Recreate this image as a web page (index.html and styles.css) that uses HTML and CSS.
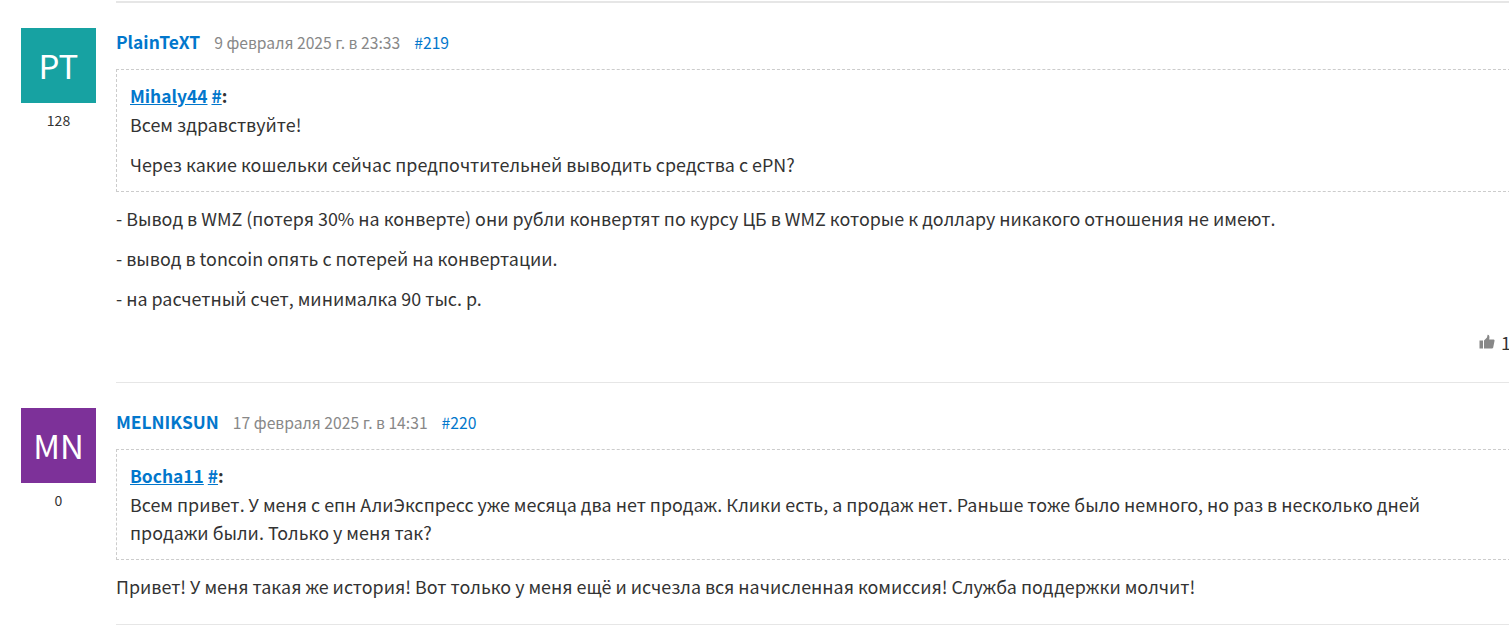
FILE: index.html
```html
<!DOCTYPE html>
<html lang="ru">
  <head>
    <meta charset="UTF-8" />
    <title>Комментарии</title>
    <link rel="stylesheet" href="styles.css">
  </head>
  <body>
    <div class="comments">
      <div class="top-rule"></div>

      <div class="comment">
        <div class="author-side">
          <div class="avatar avatar-teal">PT</div>
          <div class="rating">128</div>
        </div>
        <div class="comment-body">
          <div class="meta">
            <a class="author" href="#">PlainTeXT</a>
            <span class="date">9 февраля 2025 г. в 23:33</span>
            <a class="num" href="#">#219</a>
          </div>
          <blockquote class="quote">
            <div class="quote-head"><a href="#">Mihaly44</a> <a href="#">#</a>:</div>
            <p class="quote-first">Всем здравствуйте!</p>
            <p>Через какие кошельки сейчас предпочтительней выводить средства с ePN?</p>
          </blockquote>
          <p>- Вывод в WMZ (потеря 30% на конверте) они рубли конвертят по курсу ЦБ в WMZ которые к доллару никакого отношения не имеют.</p>
          <p>- вывод в toncoin опять с потерей на конвертации.</p>
          <p>- на расчетный счет, минималка 90 тыс. р.</p>
          <div class="likes">
            <svg class="thumb" width="16" height="16" viewBox="0 0 16 16">
              <rect x="0.5" y="6.5" width="3.5" height="8" fill="#888"/>
              <path d="M5 6.5 L8 3.5 L8.6 0.8 C10.4 0.8 10.8 2.6 10.2 5.5 L14.6 5.5 C15.6 5.5 15.8 6.6 15.4 7.4 L14.2 13.4 C14 14.2 13.4 14.5 12.6 14.5 L5 14.5 Z" fill="#888"/>
            </svg>
            <span>1</span>
          </div>
        </div>
      </div>

      <div class="comment comment-second">
        <div class="author-side">
          <div class="avatar avatar-purple">MN</div>
          <div class="rating">0</div>
        </div>
        <div class="comment-body comment-body-last">
          <div class="meta">
            <a class="author" href="#">MELNIKSUN</a>
            <span class="date">17 февраля 2025 г. в 14:31</span>
            <a class="num" href="#">#220</a>
          </div>
          <blockquote class="quote">
            <div class="quote-head"><a href="#">Bocha11</a> <a href="#">#</a>:</div>
            <p class="quote-first">Всем привет. У меня с епн АлиЭкспресс уже месяца два нет продаж. Клики есть, а продаж нет. Раньше тоже было немного, но раз в несколько дней продажи были. Только у меня так?</p>
          </blockquote>
          <p>Привет! У меня такая же история! Вот только у меня ещё и исчезла вся начисленная комиссия! Служба поддержки молчит!</p>
        </div>
      </div>
    </div>
  </body>
</html>
```

FILE: styles.css
```css
html,
body {
  margin: 0;
  padding: 0;
  overflow: hidden;
  height: 628px;
}
body {
  background: #fff;
  color: #333;
  font-family: "Noto Sans CJK SC", "Noto Sans", sans-serif;
  font-size: 17.9px;
  line-height: 28px;
}
a {
  color: #0277cc;
  text-decoration: none;
}
p {
  margin: 0 0 12px;
}
.comments {
  width: 1511px;
  padding-top: 1px;
}
.top-rule {
  margin-left: 116px;
  height: 2px;
  background: #e6e6e6;
}
.comment {
  display: flex;
  padding: 25px 0 0 21px;
}
.comment-second {
  padding-top: 0;
}
.author-side {
  width: 75px;
  margin-right: 20px;
  flex-shrink: 0;
  text-align: center;
}
.avatar {
  height: 75px;
  line-height: 75px;
  font-size: 33px;
  color: #fff;
}
.avatar-teal {
  background: #17a2a2;
}
.avatar-purple {
  background: #7d3199;
}
.rating {
  margin-top: 3px;
  font-size: 14px;
}
.comment-body {
  flex: 1;
  min-width: 0;
}
.comment-body-last {
  padding-bottom: 12px;
  border-bottom: 1px solid #e6e6e6;
}
.meta {
  height: 29px;
  margin-top: -2px;
  margin-bottom: 12px;
  padding-top: 2px;
  display: flex;
  align-items: baseline;
  gap: 14px;
  font-size: 15.7px;
}
.author {
  font-weight: 600;
  font-size: 17.4px;
}
.date {
  color: #888;
}
.quote {
  margin: 0 0 12px;
  padding: 12px 25px 13px 13px;
  border: 1px dashed #ccc;
}
.quote p:last-child {
  margin-bottom: 0;
}
.quote-head {
  font-weight: 600;
  font-size: 17.4px;
}
.quote-head a {
  text-decoration: underline;
}
.likes {
  display: flex;
  justify-content: flex-end;
  align-items: center;
  gap: 6px;
  height: 28px;
  margin-top: 16px;
  margin-bottom: 25px;
  padding-bottom: 26px;
  border-bottom: 1px solid #e6e6e6;
}
.thumb {
  display: block;
}
```
